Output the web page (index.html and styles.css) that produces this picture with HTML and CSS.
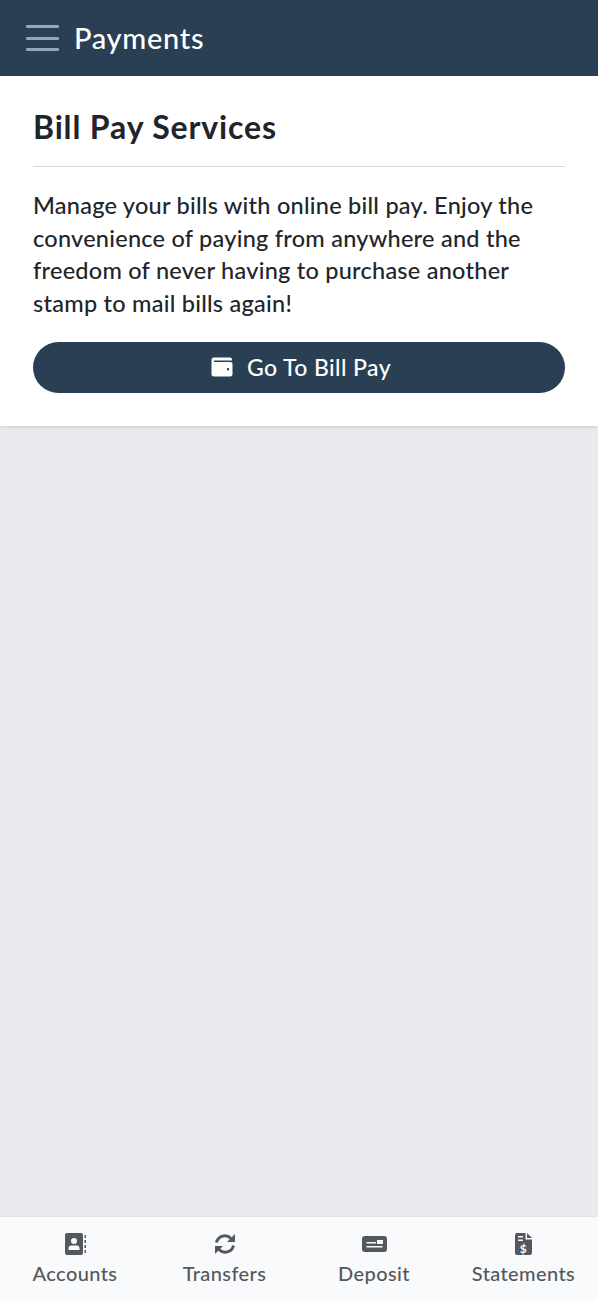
FILE: index.html
```html
<!DOCTYPE html>
<html lang="en">
<head>
<meta charset="utf-8">
<title>Payments</title>
<link rel="stylesheet" href="styles.css">
</head>
<body>
<div class="app">
  <header class="topbar">
    <button class="menu" aria-label="Menu"><span></span><span></span><span></span></button>
    <h1 class="topbar-title">Payments</h1>
  </header>
  <section class="card">
    <h2 class="card-title">Bill Pay Services</h2>
    <hr class="rule">
    <p class="card-text">Manage your bills with online bill pay. Enjoy the convenience of paying from anywhere and the freedom of never having to purchase another stamp to mail bills again!</p>
    <button class="cta">
      <svg class="cta-icon" viewBox="0 0 22 20" width="22" height="20"><path fill="#fff" fill-rule="evenodd" d="M3 0.5H19a2 2 0 0 1 2 2V3.5H3.5a.8.8 0 0 0 0 1.6H19.5a2 2 0 0 1 2 2V17a2.5 2.5 0 0 1-2.5 2.5H3A2.5 2.5 0 0 1 .5 17V3A2.5 2.5 0 0 1 3 .5ZM17 11a1.2 1.2 0 1 0 0 2.4 1.2 1.2 0 0 0 0-2.4Z"/></svg>
      <span>Go To Bill Pay</span>
    </button>
  </section>
  <main class="fill"></main>
  <nav class="tabs">
    <a class="tab">
      <svg class="tab-icon" viewBox="-1 0 22 22" width="22" height="22"><path fill="#54585d" fill-rule="evenodd" d="M2 0H16a2 2 0 0 1 2 2V20a2 2 0 0 1-2 2H2a2 2 0 0 1-2-2V2A2 2 0 0 1 2 0ZM9 5a3 3 0 1 0 0 6 3 3 0 0 0 0-6ZM3.500 17h11v-1.500a3 3 0 0 0-3-3h-5a3 3 0 0 0-3 3Z"/><path fill="#54585d" d="M19.500 2H21V5H19.500ZM19.500 7H21V10H19.500ZM19.500 12H21V15H19.500ZM19.500 17H21V20H19.500Z"/></svg>
      <span>Accounts</span>
    </a>
    <a class="tab">
      <svg class="tab-icon" viewBox="0 0 22 22" width="22" height="22"><path fill="none" stroke="#54585d" stroke-width="3" d="M2.500 9.500A8.500 8.500 0 0 1 17 5.500M19.500 12.500A8.500 8.500 0 0 1 5 16.500"/><path fill="#54585d" d="M21 1V9H13ZM1 21V13H9Z"/></svg>
      <span>Transfers</span>
    </a>
    <a class="tab">
      <svg class="tab-icon" viewBox="0 0 25 22" width="25" height="22"><path fill="#54585d" fill-rule="evenodd" d="M3 3H22a3 3 0 0 1 3 3V16a3 3 0 0 1-3 3H3a3 3 0 0 1-3-3V6A3 3 0 0 1 3 3ZM15 7v4h6V7ZM4.500 9v1.500H14V9ZM4.500 13v1.500H20.500V13Z"/></svg>
      <span>Deposit</span>
    </a>
    <a class="tab">
      <svg class="tab-icon" viewBox="0 0 17 22" width="17" height="22"><path fill="#54585d" fill-rule="evenodd" d="M2 0H10.500V6.500H17V20a2 2 0 0 1-2 2H2a2 2 0 0 1-2-2V2A2 2 0 0 1 2 0ZM3 3v1.500H8V3ZM3 6.500V8H8V6.500Z"/><path fill="#54585d" d="M12 0L17 5H12Z"/><text x="8.500" y="19.500" text-anchor="middle" class="dollar">$</text></svg>
      <span>Statements</span>
    </a>
  </nav>
</div>
</body>
</html>
```

FILE: styles.css
```css
* { box-sizing: border-box; }
html, body { margin: 0; padding: 0; }
body { font-family: "Lato", "Liberation Sans", sans-serif; background: #e9eaee; }
.app { width: 598px; height: 1300px; display: flex; flex-direction: column; }
.topbar { height: 76px; background: #2b3f54; display: flex; align-items: center; padding-left: 26px; gap: 15px; flex: none; }
.menu { width: 33px; height: 26px; padding: 0; border: 0; background: none; display: flex; flex-direction: column; justify-content: space-between; }
.menu span { display: block; height: 3px; border-radius: 1px; background: #93a7b8; }
.topbar-title { margin: 0; color: #fff; font-size: 29px; font-weight: 500; letter-spacing: 0.7px; line-height: 34px; }
.card { background: #fff; height: 350px; padding: 32px 33px 0; flex: none; box-shadow: 0 1px 4px rgba(0,0,0,.12); position: relative; }
.card-title { margin: 0; color: #212529; font-size: 32px; font-weight: 700; line-height: 37px; letter-spacing: 0.85px; }
.rule { margin: 21px 0 0; border: 0; border-top: 1px solid #d5d6d8; }
.card-text { margin: 22px 0 0; color: #212529; font-size: 23.500px; font-weight: 500; line-height: 32.700px; letter-spacing: 0.25px; }
.cta { margin-top: 22px; width: 100%; height: 51px; padding: 0 0 0 4px; border: 0; border-radius: 26px; background: #2b3f54; color: #fff; font: inherit; font-size: 23px; font-weight: 500; letter-spacing: 0.4px; display: flex; align-items: center; justify-content: center; gap: 14px; }
.cta-icon { display: block; }
.fill { flex: 1; }
.tabs { height: 84px; flex: none; background: #f9fafc; border-top: 1px solid #e3e4e7; display: grid; grid-template-columns: 150px 149px 150px 149px; }
.tab { display: flex; flex-direction: column; align-items: center; padding-top: 16px; color: #54585d; font-size: 20px; font-weight: 500; letter-spacing: 0.4px; line-height: 26px; }
.tab-icon { display: block; margin-bottom: 5px; }
.dollar { font-family: "Lato", sans-serif; font-size: 12px; font-weight: 700; fill: #f9fafc; }
```
